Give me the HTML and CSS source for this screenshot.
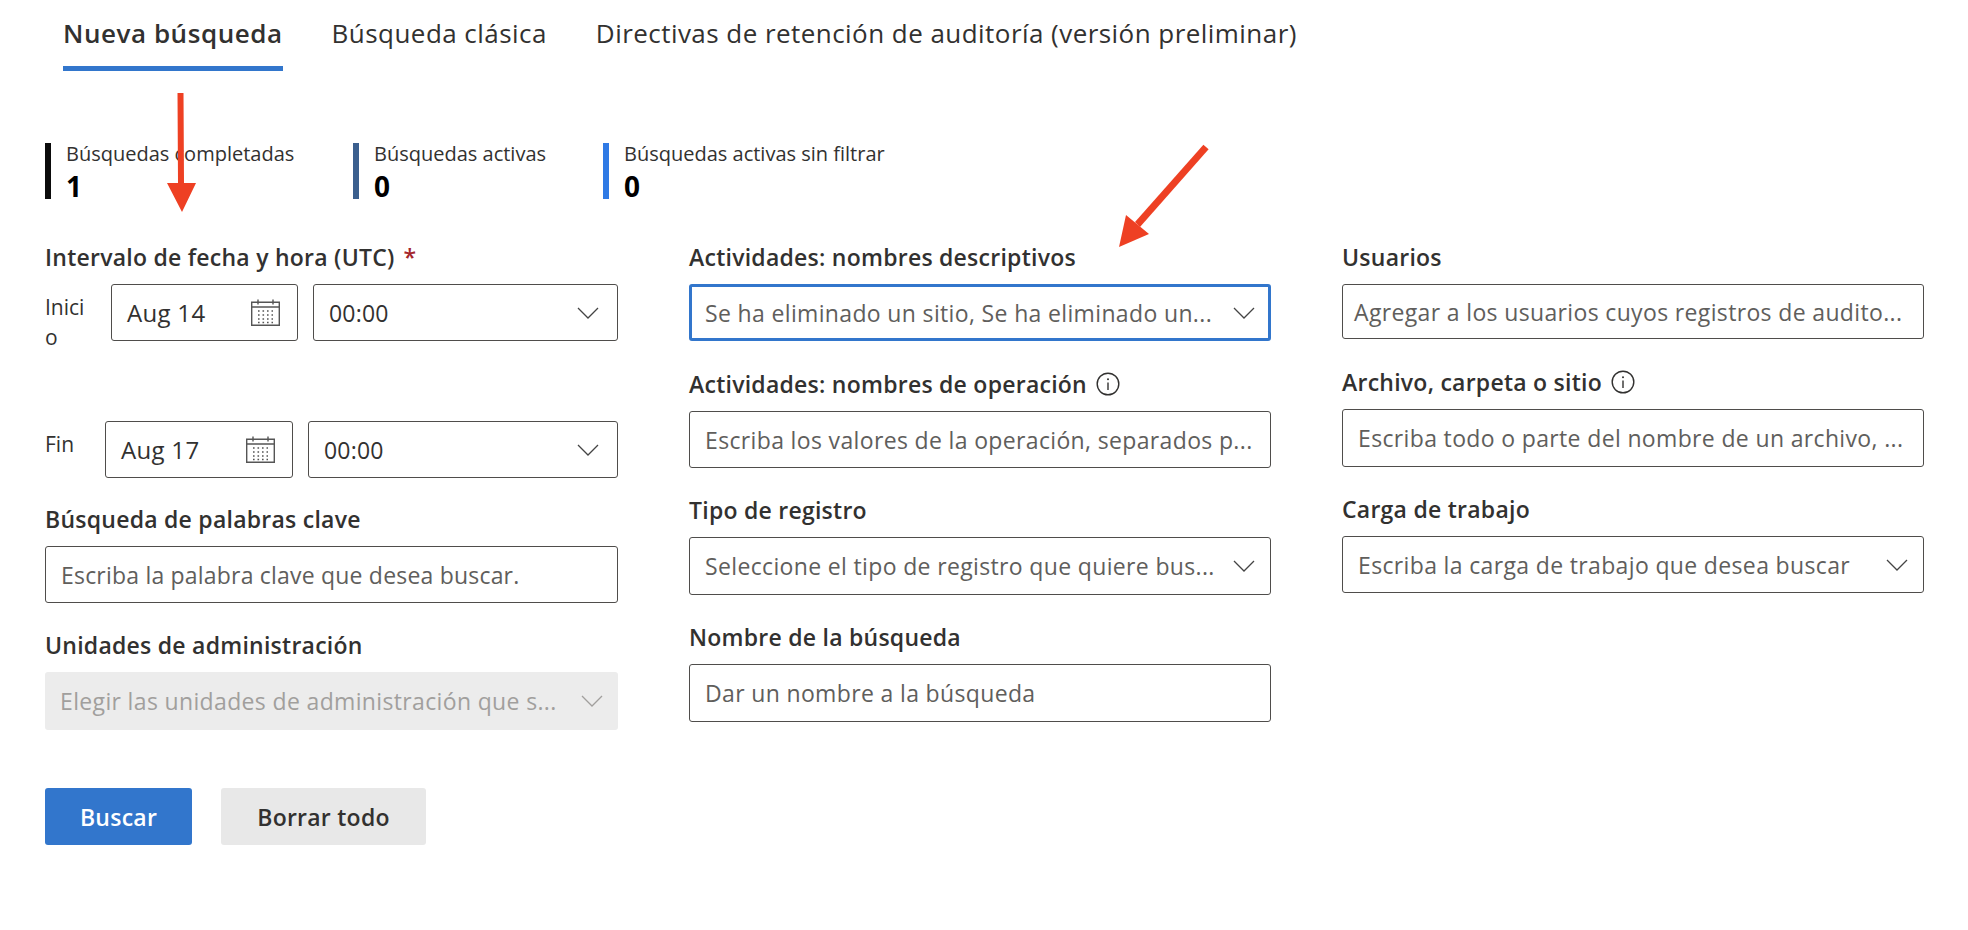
FILE: index.html
```html
<!DOCTYPE html>
<html lang="es">
<head>
    <meta charset="UTF-8">
    <title>Búsqueda de auditoría</title>
    <link rel="stylesheet" href="styles.css">
</head>
<body>
    <svg width="0" height="0" class="defs">
        <symbol id="chevron" viewBox="0 0 22 12">
            <path d="M1 1l10 10L21 1" fill="none" stroke="currentColor" stroke-width="1.3"/>
        </symbol>
        <symbol id="calendar" viewBox="0 0 29 27">
            <path d="M.7 3.2h27.6v23.1H.7zM.7 8h27.6M7 .5v5M22 .5v5" fill="none" stroke="#555" stroke-width="1.4"/>
            <path d="M7 12h15M7 16h15M7 20h15M7 23.5h15" fill="none" stroke="#555" stroke-width="1.6" stroke-dasharray="1.6 2.9"/>
        </symbol>
        <symbol id="info" viewBox="0 0 24 24">
            <circle cx="12" cy="12" r="10.8" fill="none" stroke="#323130" stroke-width="1.4"/>
            <path d="M12 10.5V18" stroke="#323130" stroke-width="1.4"/>
            <circle cx="12" cy="7.3" r="1" fill="#323130"/>
        </symbol>
    </svg>

    <!-- Tabs -->
    <nav class="tabs">
        <div class="tab active">Nueva búsqueda</div>
        <div class="tab">Búsqueda clásica</div>
        <div class="tab">Directivas de retención de auditoría (versión preliminar)</div>
    </nav>

    <!-- Counters -->
    <div class="stats">
        <div class="stat stat-black"><span class="stat-label">Búsquedas completadas</span><b class="stat-value">1</b></div>
        <div class="stat stat-navy"><span class="stat-label">Búsquedas activas</span><b class="stat-value">0</b></div>
        <div class="stat stat-blue"><span class="stat-label">Búsquedas activas sin filtrar</span><b class="stat-value">0</b></div>
    </div>

    <div class="form">
        <!-- Left column -->
        <div class="col">
            <div class="field">
                <div class="label">Intervalo de fecha y hora (UTC) <span class="req">*</span></div>
                <div class="date-row">
                    <div class="date-label date-label-start">Inicio</div>
                    <div class="box box-date">Aug 14<svg class="cal"><use href="#calendar"/></svg></div>
                    <div class="box box-time">00:00<svg class="chev"><use href="#chevron"/></svg></div>
                </div>
                <div class="date-row date-row-end">
                    <div class="date-label date-label-end">Fin</div>
                    <div class="box box-date">Aug 17<svg class="cal"><use href="#calendar"/></svg></div>
                    <div class="box box-time">00:00<svg class="chev"><use href="#chevron"/></svg></div>
                </div>
            </div>
            <div class="field field-keywords">
                <div class="label">Búsqueda de palabras clave</div>
                <div class="box box-keywords">Escriba la palabra clave que desea buscar.</div>
            </div>
            <div class="field">
                <div class="label">Unidades de administración</div>
                <div class="box box-disabled">Elegir las unidades de administración que s...<svg class="chev"><use href="#chevron"/></svg></div>
            </div>
            <div class="actions">
                <div class="btn btn-primary">Buscar</div>
                <div class="btn btn-default">Borrar todo</div>
            </div>
        </div>

        <!-- Middle column -->
        <div class="col">
            <div class="field">
                <div class="label">Actividades: nombres descriptivos</div>
                <div class="box box-focus">Se ha eliminado un sitio, Se ha eliminado un...<svg class="chev"><use href="#chevron"/></svg></div>
            </div>
            <div class="field field-second">
                <div class="label">Actividades: nombres de operación <svg class="info"><use href="#info"/></svg></div>
                <div class="box">Escriba los valores de la operación, separados p...</div>
            </div>
            <div class="field">
                <div class="label">Tipo de registro</div>
                <div class="box box-tall">Seleccione el tipo de registro que quiere bus...<svg class="chev"><use href="#chevron"/></svg></div>
            </div>
            <div class="field">
                <div class="label">Nombre de la búsqueda</div>
                <div class="box box-tall">Dar un nombre a la búsqueda</div>
            </div>
        </div>

        <!-- Right column -->
        <div class="col">
            <div class="field">
                <div class="label">Usuarios</div>
                <div class="box box-people">Agregar a los usuarios cuyos registros de audito...</div>
            </div>
            <div class="field field-second">
                <div class="label">Archivo, carpeta o sitio <svg class="info"><use href="#info"/></svg></div>
                <div class="box box-tall">Escriba todo o parte del nombre de un archivo, ...</div>
            </div>
            <div class="field">
                <div class="label">Carga de trabajo</div>
                <div class="box">Escriba la carga de trabajo que desea buscar<svg class="chev"><use href="#chevron"/></svg></div>
            </div>
        </div>
    </div>

    <!-- Red annotation arrows drawn over the page -->
    <svg class="arrows" width="1968" height="930" viewBox="0 0 1968 930">
        <path d="M177.5 93h6l.5 90h12l-14 29-15-29h11z" fill="#ee4023"/>
        <path d="M1203.4 144.7l5.2 4.6-68.6 77.7-5-5z" fill="#ee4023"/>
        <path d="M1119 247l7-32 23 19z" fill="#ee4023"/>
    </svg>
</body>
</html>
```

FILE: styles.css
```css
body {
    margin: 0;
    background: #fff;
    color: #323130;
    font-family: "Open Sans", "Noto Sans", sans-serif;
    position: relative;
    height: 930px;
    overflow: hidden;
}

.defs {
    position: absolute;
}

.arrows {
    position: absolute;
    left: 0;
    top: 0;
    pointer-events: none;
}

/* tabs */
.tabs {
    display: flex;
    gap: 49px;
    padding-left: 63px;
    height: 71px;
}

.tab {
    font-size: 26px;
    line-height: 66px;
    letter-spacing: 0.45px;
    white-space: nowrap;
}

.tab.active {
    font-weight: 600;
    letter-spacing: 0.55px;
    border-bottom: 5px solid #3276cc;
    height: 66px;
}

/* counters */
.stats {
    display: flex;
    margin: 72px 0 0 45px;
}

.stat {
    display: flex;
    flex-direction: column;
    height: 56px;
    border-left: 6px solid;
    padding-left: 15px;
}

.stat-black {
    border-color: #0b0b0b;
    width: 287px;
}

.stat-navy {
    border-color: #3b5f8e;
    width: 229px;
}

.stat-blue {
    border-color: #2f7ae5;
}

.stat-label {
    font-size: 20px;
    line-height: 21px;
}

.stat-value {
    margin-top: 3px;
    font-size: 28px;
    line-height: 38px;
    color: #000;
}

/* form */
.form {
    display: flex;
    gap: 71px;
    margin: 47px 0 0 45px;
}

.col {
    width: 582px;
}

.col:first-child {
    width: 573px;
}

.field + .field {
    margin-top: 31px;
}

.field + .field-keywords {
    margin-top: 30px;
}

.field + .field-second {
    margin-top: 32px;
}

.label {
    display: flex;
    align-items: center;
    gap: 9px;
    box-sizing: border-box;
    height: 24px;
    padding-bottom: 2px;
    margin-bottom: 14px;
    font-size: 23px;
    font-weight: 600;
    letter-spacing: 0.25px;
    white-space: nowrap;
}

.req {
    color: #a4262c;
}

.info {
    width: 24px;
    height: 24px;
}

.box {
    display: flex;
    align-items: center;
    justify-content: space-between;
    box-sizing: border-box;
    height: 57px;
    padding: 0 15px;
    border: 1px solid #4f4d4b;
    border-radius: 3px;
    font-size: 23px;
    letter-spacing: 0.35px;
    color: #605e5c;
    white-space: nowrap;
}

.chev {
    flex: none;
    width: 22px;
    height: 12px;
    color: #444;
}

.cal {
    flex: none;
    width: 29px;
    height: 27px;
}

.box-tall {
    height: 58px;
}

.box-keywords {
    letter-spacing: 0.2px;
}

.box-focus {
    border: 3px solid #3276cc;
    padding: 0 13px;
}

.box-disabled {
    height: 58px;
    border: 0;
    background: #ececec;
    color: #a19f9d;
}

.box-disabled .chev {
    color: #a19f9d;
}

.box-people {
    padding: 0 11px;
    height: 55px;
}

/* date rows */
.date-row {
    display: flex;
    height: 57px;
}

.date-row-end {
    margin-top: 80px;
}

.date-label {
    flex: none;
    box-sizing: border-box;
    padding-top: 8px;
    font-size: 21px;
    line-height: 30px;
    word-break: break-all;
}

.date-label-start {
    width: 66px;
    padding-right: 24px;
}

.date-label-end {
    width: 60px;
}

.box-date {
    width: 187px;
    padding-right: 17px;
    font-size: 24px;
    letter-spacing: 0.3px;
    color: #323130;
}

.date-label-end + .box-date {
    width: 188px;
}

.box-time {
    flex: 1;
    margin-left: 15px;
    padding-right: 18px;
    letter-spacing: 0.2px;
    color: #323130;
}

/* buttons */
.actions {
    display: flex;
    gap: 29px;
    margin-top: 58px;
}

.btn {
    display: flex;
    align-items: center;
    justify-content: center;
    height: 57px;
    border-radius: 3px;
    font-size: 23px;
    font-weight: 600;
    letter-spacing: 0.25px;
}

.btn-primary {
    width: 147px;
    background: #3276cc;
    color: #fff;
}

.btn-default {
    width: 205px;
    background: #e8e8e8;
}
```
